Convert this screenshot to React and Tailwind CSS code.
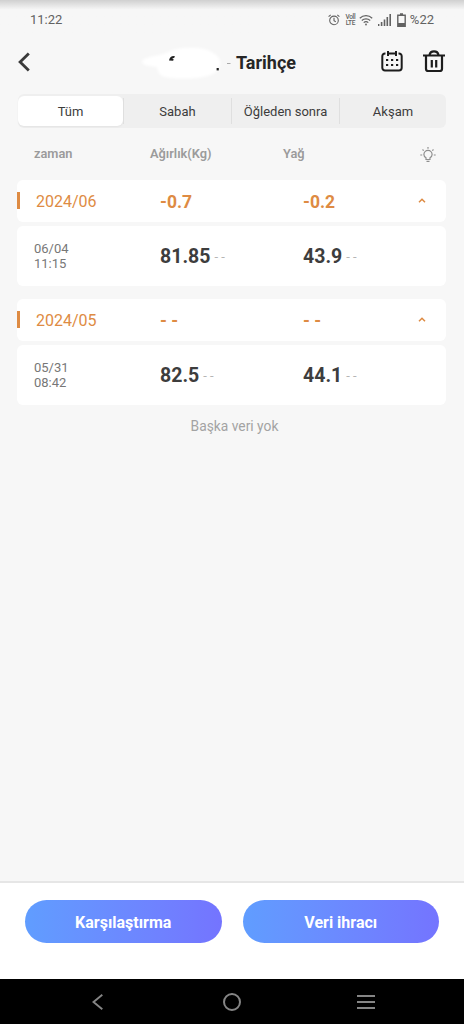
import React, { useState } from 'react';

const TABS = [
  { label: 'Tüm', width: 'w-[105px]' },
  { label: 'Sabah', width: 'w-[108px]' },
  { label: 'Öğleden sonra', width: 'w-[108px]' },
  { label: 'Akşam', width: 'w-[107px]' },
];

const MONTHS = [
  {
    month: '2024/06',
    weight: '-0.7',
    fat: '-0.2',
    records: [{ date: '06/04', time: '11:15', weight: '81.85', fat: '43.9' }],
  },
  {
    month: '2024/05',
    weight: '- -',
    fat: '- -',
    records: [{ date: '05/31', time: '08:42', weight: '82.5', fat: '44.1' }],
  },
];

const StatusBar = () => (
  <div className="flex h-[39px] shrink-0 items-center bg-linear-to-b from-[#d0d0d0] via-[#f7f7f7] via-25% to-[#f7f7f7] pl-[30px] pr-[30px] text-[13px] text-[#626262]">
    <span className="flex-1">11:22</span>
    <svg className="h-3 w-3" viewBox="0 0 12 12" fill="none" stroke="#626262" strokeWidth="1.1">
      <circle cx="6" cy="6.4" r="4.3" />
      <path d="M6 3.8v2.8l1.8 1.1M.6 2.7 2.7.8M11.4 2.7 9.3.8" />
    </svg>
    <span className="ml-[5px] w-[11px] text-center text-[6.5px] leading-[6px] font-medium tracking-tighter">
      Voll<br />LTE
    </span>
    <svg className="ml-[3px] h-3 w-[14px]" viewBox="0 0 14 12" fill="none" stroke="#626262" strokeWidth="1.2">
      <path d="M.8 4.2a9 9 0 0 1 12.400 0M2.800 6.500a6.200 6.200 0 0 1 8.400 0M4.700 8.600a3.500 3.500 0 0 1 4.600 0" />
      <circle cx="7" cy="10.5" r=".9" fill="#626262" stroke="none" />
    </svg>
    <svg className="ml-[5px] h-3 w-[13px]" viewBox="0 0 13 12" fill="#626262">
      <path d="M0 10h1.4v2H0zM2.8 8h1.6v4H2.8zM5.7 5.5h1.6V12H5.7zM8.5 3h1.6v9H8.5zM11.4 0H13v12h-1.6z" />
    </svg>
    <svg className="ml-1.5 h-[14px] w-[9px]" viewBox="0 0 9 14">
      <path d="M.8 2.2h7.4v11H.8zM3 1h3" fill="none" stroke="#626262" strokeWidth="1.4" />
      <path d="M1 10h7v3H1z" fill="#626262" />
    </svg>
    <span className="ml-1">%22</span>
  </div>
);

const Header = () => (
  <div className="flex h-[47px] shrink-0 items-center pl-[18px] pr-[18px]">
    <svg className="-mt-0.5 h-5 w-3" viewBox="0 0 12 20" fill="none" stroke="#3a3a3a" strokeWidth="2.8">
      <path d="m10.8 1.4-8.700 8.600 8.700 8.600" />
    </svg>
    {/* Smudged out profile name */}
    <svg className="ml-[106px] h-[38px] w-[100px]" viewBox="0 0 100 38">
      <path
        className="blur-[1.5px]"
        d="M6 17C12 11 24 13 34 7c14-5 36-4 43 2 9 4 9 14 3 19-8 7-36 8-51 5-7-2-7-6-8-10-7-1-15-1-15-6z"
        fill="#fff"
      />
      <path d="M33 16.600c.5-3 2-4.800 5.800-4.500l-.6 2-2 .2 1.500 1.100-.6 1.400z" fill="#222" />
      <path d="M80.600 24h2.200v2.400h-2.200z" fill="#222" />
      <path d="M91 19.500h3.500" stroke="#aaa" />
    </svg>
    <h1 className="flex-1 text-lg font-bold text-[#262626]">Tarihçe</h1>
    <svg className="-mt-1 h-[22px] w-[22px]" viewBox="0 0 22 22" fill="none" stroke="#1d1d1d" strokeWidth="2">
      <path d="M4.500 3.500H4A2.700 2.700 0 0 0 1.300 6.200v11.600A2.700 2.700 0 0 0 4 20.500h14a2.700 2.700 0 0 0 2.700-2.700V6.200A2.700 2.700 0 0 0 18 3.500h-.500M7 3.500h8M7 1v5M15 1v5" />
      <path d="M5 10h2.200M10 10h2.200M15 10h2.200M5 15h2.200M10 15h2.200M15 15h2.200" />
    </svg>
    <svg className="-mt-0.5 ml-[19px] h-[23px] w-6" viewBox="0 0 24 23" fill="none" stroke="#1d1d1d" strokeWidth="2.2">
      <path d="M1 5.500h22M7.500 5C8 2.500 9.500 1.400 12 1.400s4 1.100 4.500 3.600M4 6v12.700A2.300 2.300 0 0 0 6.300 21h11.400a2.300 2.300 0 0 0 2.300-2.300V6M9.800 10v7.500M14.200 10v7.500" />
    </svg>
  </div>
);

const Tabs = ({ active, onChange }) => (
  <div className="mx-[18px] mt-2 flex h-[34px] shrink-0 items-center rounded-md bg-[#efefef]">
    {TABS.map((tab, i) => (
      <button
        key={tab.label}
        onClick={() => onChange(i)}
        className={`flex items-center justify-center pt-0.5 text-[13px] text-[#3c3c3c] ${tab.width} ${
          i === active ? 'h-[30px] rounded-md bg-white shadow-xs' : 'h-[26px] border-l border-[#dfdfdf]'
        }`}
      >
        {tab.label}
      </button>
    ))}
  </div>
);

const ColumnTitles = () => (
  <div className="flex h-[52px] shrink-0 items-center pl-[34px] pr-7 text-[12.8px] font-semibold text-[#9b9b9b]">
    <span className="w-[116px]">zaman</span>
    <span className="w-[133px]">Ağırlık(Kg)</span>
    <span className="flex-1">Yağ</span>
    <svg className="h-[15px] w-4" viewBox="0 0 16 15" fill="none" stroke="#8e8e8e" strokeWidth="1.200">
      <path d="M6 10.800C4.600 10 3.900 8.900 3.900 7.500a4.100 4.100 0 0 1 8.200 0c0 1.400-.700 2.500-2.100 3.300v1.700H6zM6.500 14.300h3M8 0v1.800M2.500 2.500l1.200 1.100M13.500 2.500l-1.200 1.100M.300 8h1.900M13.800 8h1.900" />
    </svg>
  </div>
);

const MonthRow = ({ month, weight, fat }) => (
  <div className="flex h-[42px] items-center rounded-md bg-white pr-5 text-[#de8b43]">
    <span className="-mt-0.5 h-[17px] w-[3px] bg-[#de8b43]" />
    <span className="ml-4 w-[124px] pt-0.5 text-base">{month}</span>
    <span className="w-[143px] pt-0.5 text-[17.5px] font-bold">{weight}</span>
    <span className="flex-1 pt-0.5 text-[17.5px] font-bold">{fat}</span>
    <svg className="-mt-0.5 h-[5px] w-2" viewBox="0 0 8 5" fill="none" stroke="#de8b43" strokeWidth="1.5">
      <path d="m1 4.200 3-3 3 3" />
    </svg>
  </div>
);

const Value = ({ children }) => (
  <span className="flex w-[143px] items-center gap-1 pt-0.5">
    <span className="text-[19.5px] font-bold text-[#3d3d3d]">{children}</span>
    <span className="text-[13px] text-[#b5b5b5]">- -</span>
  </span>
);

const RecordRow = ({ date, time, weight, fat }) => (
  <div className="mt-1 flex h-[60px] items-center rounded-md bg-white pl-[17px]">
    <span className="w-[126px] text-[13px] leading-[15px] text-[#777]">
      {date}<br />{time}
    </span>
    <Value>{weight}</Value>
    <Value>{fat}</Value>
  </div>
);

const BottomActions = () => (
  <div className="flex h-[98px] shrink-0 gap-[21px] border-t-2 border-[#e6e6e6] bg-white px-[25px] pt-[17px]">
    {['Karşılaştırma', 'Veri ihracı'].map((label) => (
      <button
        key={label}
        className="h-[43px] flex-1 rounded-full bg-linear-to-r from-[#609dff] to-[#7474ff] pt-0.5 text-base font-bold text-white"
      >
        {label}
      </button>
    ))}
  </div>
);

const NavBar = () => (
  <div className="flex h-[45px] shrink-0 items-center justify-between bg-black pl-[92px] pr-[89px]">
    <svg className="h-4 w-[11px]" viewBox="0 0 11 16" fill="none" stroke="#858585" strokeWidth="1.900">
      <path d="M10.300.8 1.500 8l8.800 7.200" />
    </svg>
    <span className="ml-[3px] h-[18px] w-[18px] rounded-full border-2 border-[#858585]" />
    <span className="flex w-[18px] flex-col gap-1">
      <span className="h-0.5 bg-[#858585]" />
      <span className="h-0.5 bg-[#858585]" />
      <span className="h-0.5 bg-[#858585]" />
    </span>
  </div>
);

const App = () => {
  const [activeTab, setActiveTab] = useState(0);

  return (
    <div className="flex h-screen flex-col bg-[#f7f7f7] font-[Roboto,sans-serif]">
      <StatusBar />
      <Header />
      <Tabs active={activeTab} onChange={setActiveTab} />
      <ColumnTitles />

      {/* History list */}
      <div className="flex-1 pl-[17px] pr-[18px]">
        {MONTHS.map(({ records, ...month }) => (
          <div key={month.month} className="mb-[13px]">
            <MonthRow {...month} />
            {records.map((record) => (
              <RecordRow key={record.date} {...record} />
            ))}
          </div>
        ))}
        <p className="-mt-0.5 pl-1.5 text-center text-[13.8px] text-[#a3a3a3]">Başka veri yok</p>
      </div>

      <BottomActions />
      <NavBar />
    </div>
  );
};

export default App;
